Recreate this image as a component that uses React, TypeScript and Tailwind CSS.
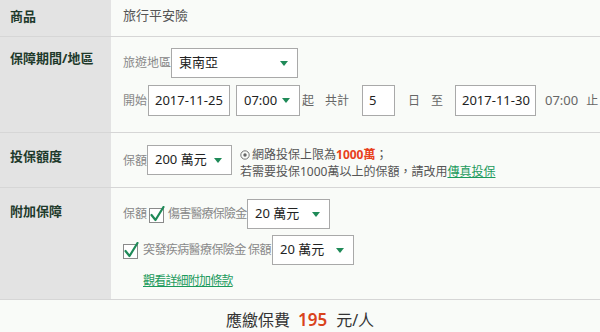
import React from "react";

const Caret = () => (
  <svg width="8" height="5" viewBox="0 0 8 5" className="shrink-0">
    <path d="M0 0 L8 0 L4 5 Z" fill="#1f8a58" />
  </svg>
);

const Select = ({ w, text, h = "h-[30px]" }: { w: string; text: string; h?: string }) => (
  <div className={`${w} ${h} flex items-center justify-between border border-[#a9a9a9] bg-white pl-[7px] pr-[9px] text-[13px] text-[#222]`}>
    <span>{text}</span>
    <Caret />
  </div>
);

const Input = ({ w, text }: { w: string; text: string }) => (
  <div className={`${w} h-[31px] flex items-center border border-[#a9a9a9] bg-white pl-[6px] text-[13px] text-[#222]`}>
    {text}
  </div>
);

const Check = () => (
  <svg width="16" height="17" viewBox="0 0 16 17" className="shrink-0">
    <rect x="0.5" y="2.5" width="14" height="14" fill="#fff" stroke="#8a8a8a" />
    <path d="M2.5 9 L6.5 14 L14.5 1" stroke="#1f8a58" strokeWidth="2.2" fill="none" strokeLinecap="round" strokeLinejoin="round" />
  </svg>
);

const Label = ({ children, pt }: { children: React.ReactNode; pt: string }) => (
  <div className={`w-[111px] shrink-0 bg-[#e3e3e3] pl-[10px] ${pt} text-[13px] font-bold text-[#1e3a2b]`}>
    {children}
  </div>
);

export default function App() {
  return (
    <div
      className="w-[600px] h-[332px] overflow-hidden bg-[#f9fbf8] text-[#555]"
      style={{ fontFamily: '"Noto Sans", "Noto Sans CJK TC", sans-serif' }}
    >
      {/* Row 1 */}
      <div className="flex h-[37px] border-b border-[#d6d6d6]">
        <Label pt="pt-[7px]">商品</Label>
        <div className="flex-1 pl-[12px] pt-[6px] text-[13px] text-[#555]">旅行平安險</div>
      </div>

      {/* Row 2 */}
      <div className="flex h-[96px] border-b border-[#d6d6d6]">
        <Label pt="pt-[12px]">保障期間/地區</Label>
        <div className="flex-1 pl-[12px] pt-[11px] flex flex-col gap-[7px] text-[12px] text-[#888]">
          <div className="flex items-center">
            <span className="w-[48px]">旅遊地區</span>
            <Select w="w-[127px]" text="東南亞" />
          </div>
          <div className="flex items-center">
            <span className="w-[25px]">開始</span>
            <Input w="w-[82px]" text="2017-11-25" />
            <div className="w-[6px]" />
            <Select w="w-[64px]" text="07:00" h="h-[31px]" />
            <span className="ml-[2px] w-[23px] text-[#666]">起</span>
            <span className="w-[37px] text-[#666]">共計</span>
            <Input w="w-[33px]" text="5" />
            <span className="ml-[13px] w-[23px] text-[#666]">日</span>
            <span className="w-[24px] text-[#666]">至</span>
            <Input w="w-[81px]" text="2017-11-30" />
            <span className="ml-[9px] text-[13px] text-[#666]">07:00</span>
            <span className="ml-[8px] text-[#666]">止</span>
          </div>
        </div>
      </div>

      {/* Row 3 */}
      <div className="flex h-[55px] border-b border-[#d6d6d6]">
        <Label pt="pt-[14px]">投保額度</Label>
        <div className="flex-1 pl-[12px] pt-[12px] flex items-start text-[12px] text-[#888]">
          <span className="w-[24px] mt-[7px]">保額</span>
          <Select w="w-[85px]" text="200 萬元" />
          <div className="ml-[8px] mt-[1px] leading-[17px] text-[12px] text-[#555]">
            <div className="flex items-center">
              <svg width="10" height="10" viewBox="0 0 10 10" className="mr-[2px]">
                <circle cx="5" cy="5" r="4.2" fill="none" stroke="#666" strokeWidth="0.9" />
                <circle cx="5" cy="5" r="1.7" fill="#666" />
              </svg>
              <span>網路投保上限為</span>
              <span className="font-bold text-[#e8401c]">1000萬</span>
              <span>；</span>
            </div>
            <div>
              若需要投保1000萬以上的保額，請改用
              <span className="text-[#1b9a5c] underline">傳真投保</span>
            </div>
          </div>
        </div>
      </div>

      {/* Row 4 */}
      <div className="flex h-[112px] border-b border-[#d6d6d6]">
        <Label pt="pt-[14px]">附加保障</Label>
        <div className="flex-1 pl-[12px] pt-[11px] flex flex-col text-[12px] text-[#888]">
          <div className="flex items-center">
            <span className="w-[26px]">保額</span>
            <Check />
            <span className="ml-[3px] w-[79px] tracking-[-0.8px]">傷害醫療保險金</span>
            <Select w="w-[83px]" text="20 萬元" />
          </div>
          <div className="flex items-center mt-[6px]">
            <Check />
            <span className="ml-[4px] w-[129px] tracking-[-0.6px]">突發疾病醫療保險金 保額</span>
            <Select w="w-[82px]" text="20 萬元" />
          </div>
          <div className="ml-[20px] mt-[7px] text-[12px] tracking-[-0.8px] text-[#1b9a5c] underline">觀看詳細附加條款</div>
        </div>
      </div>

      {/* Total */}
      <div className="flex items-center justify-center h-[32px] pt-[7px] text-[16px] text-[#333]">
        <span>應繳保費</span>
        <span className="ml-[8px] mr-[9px] text-[17px] font-semibold text-[#d9431c]">195</span>
        <span>元/人</span>
      </div>
    </div>
  );
}
